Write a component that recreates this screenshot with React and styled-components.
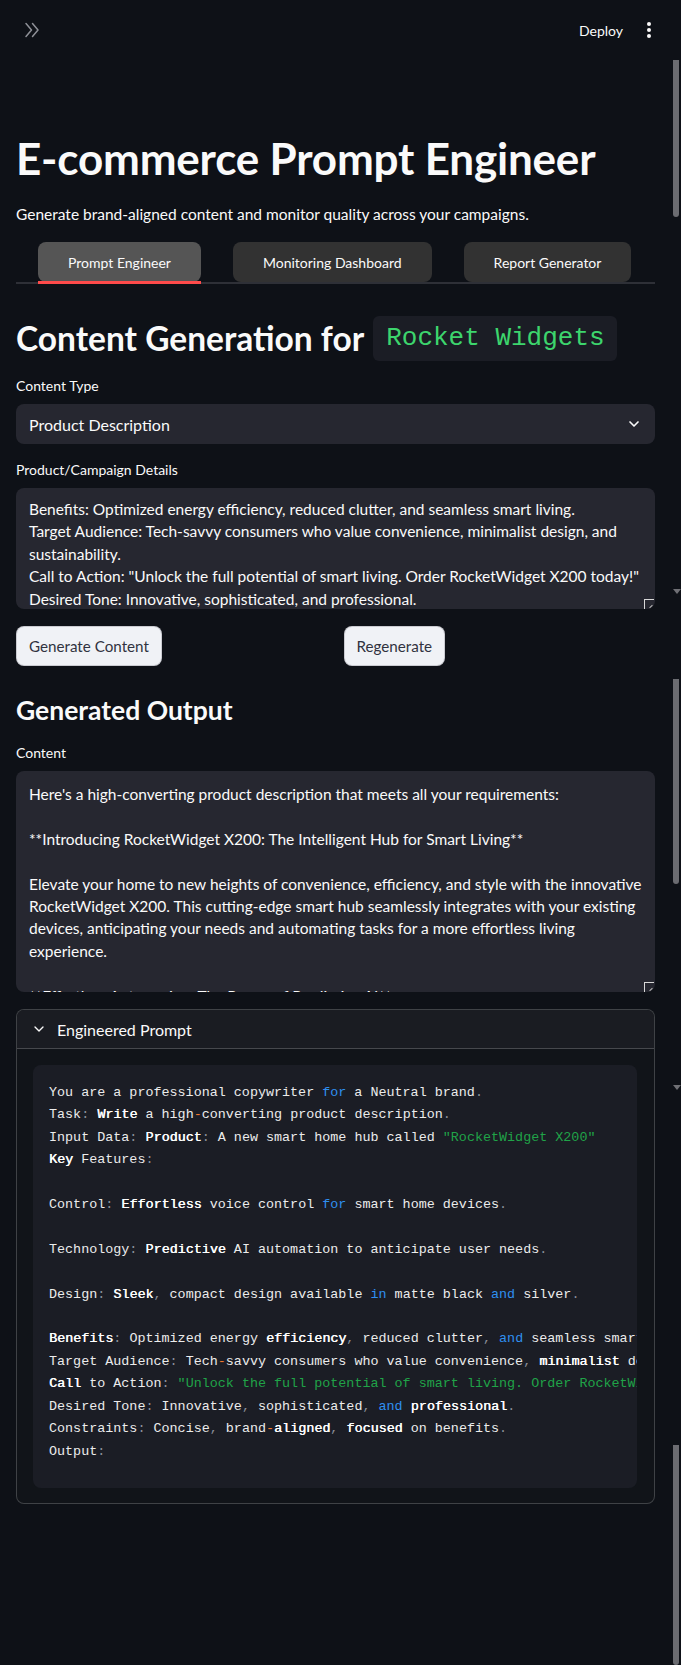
import React from 'react';
import styled, { createGlobalStyle } from 'styled-components';
import { ChevronDown } from 'lucide-react';

const GlobalStyle = createGlobalStyle`
  html, body { margin: 0; padding: 0; background: #0e1117; }
  body { font-family: Lato, "Noto Sans", sans-serif; color: #fafafa; }
  * { box-sizing: border-box; }
`;

const Page = styled.div`
  display: flex;
  min-height: 1665px;
  background: #0e1117;
`;

const Main = styled.main`
  flex: 1;
  min-width: 0;
  padding: 0 18px 0 16px;
  display: flex;
  flex-direction: column;
`;

const Rail = styled.div`
  width: 8px;
  flex-shrink: 0;
  display: flex;
  flex-direction: column;
  align-items: flex-start;
`;

const RailGap = styled.div`
  height: ${(p) => p.$h}px;
  flex-shrink: 0;
`;

const Thumb = styled.div`
  width: 6px;
  height: ${(p) => (p.$h ? `${p.$h}px` : 'auto')};
  flex: ${(p) => (p.$h ? '0 0 auto' : '1')};
  background: #6b6c71;
  border-radius: 0 0 3px 3px;
`;

const RailArrow = styled.div`
  width: 0;
  height: 0;
  border-left: 4px solid transparent;
  border-right: 4px solid transparent;
  border-top: 5px solid #6f7075;
`;

const Header = styled.header`
  height: 60px;
  display: flex;
  align-items: center;
  justify-content: space-between;
  padding-left: 8px;
  margin-right: -2px;
`;

const IconButton = styled.button`
  background: none;
  border: 0;
  padding: 0;
  display: flex;
  align-items: center;
  justify-content: center;
  color: ${(p) => p.$color || '#fafafa'};
  cursor: pointer;
`;

const HeaderRight = styled.div`
  display: flex;
  align-items: center;
  gap: 18px;
`;

const DeployButton = styled.button`
  background: none;
  border: 0;
  padding: 0;
  color: #fafafa;
  font-family: inherit;
  font-size: 14px;
`;

const Title = styled.h1`
  margin: 72px 0 0;
  font-size: 44px;
  line-height: 52px;
  font-weight: 700;
  letter-spacing: -0.2px;
`;

const Subtitle = styled.p`
  margin: 18px 0 0;
  font-size: 15.5px;
  line-height: 24px;
`;

const TabList = styled.div`
  margin-top: 16px;
  display: flex;
  gap: 32px;
  padding-left: 22px;
  border-bottom: 2px solid #2e3037;
`;

const Tab = styled.button`
  position: relative;
  height: 40px;
  padding: 0 30px;
  border: 0;
  border-radius: 8px;
  background: ${(p) => (p.$active ? '#555555' : '#323232')};
  color: #fafafa;
  font-family: inherit;
  font-size: 14px;
  &::after {
    content: '';
    position: absolute;
    left: 0;
    right: 0;
    bottom: -2px;
    height: 3px;
    background: ${(p) => (p.$active ? '#ff4b4b' : 'transparent')};
  }
`;

const H2 = styled.h2`
  margin: 30px 0 0;
  font-size: 33.5px;
  line-height: 48px;
  font-weight: 700;
  display: flex;
  align-items: center;
  gap: 9px;
`;

const InlineCode = styled.code`
  display: inline-block;
  font-family: "Liberation Mono", "DejaVu Sans Mono", monospace;
  font-weight: 400;
  font-size: 26px;
  line-height: 31px;
  padding: 7px 12px 7px 13px;
  border-radius: 6px;
  background: #1b1d25;
  color: #3dd56d;
`;

const Label = styled.label`
  display: block;
  font-size: 14px;
  line-height: 20px;
  margin-top: ${(p) => p.$mt || 16}px;
  margin-bottom: 8px;
`;

const Select = styled.div`
  height: 40px;
  border-radius: 8px;
  background: #262730;
  display: flex;
  align-items: center;
  justify-content: space-between;
  padding: 0 13px;
  font-size: 16px;
`;

const TextBox = styled.div`
  position: relative;
  height: ${(p) => p.$h}px;
  border-radius: 8px;
  background: #262730;
  overflow: hidden;
  display: flex;
  flex-direction: column;
  justify-content: ${(p) => (p.$bottom ? 'flex-end' : 'flex-start')};
`;

const TextContent = styled.div`
  padding: ${(p) => (p.$bottom ? '0 13px' : '12px 13px 0')};
  margin-bottom: ${(p) => (p.$bottom ? '-1px' : '0')};
  font-size: 15.5px;
  line-height: 22.4px;
  white-space: pre-wrap;
  flex-shrink: 0;
`;

const Grip = styled.div`
  position: absolute;
  right: 1px;
  bottom: 0;
  width: 10px;
  height: 10px;
  border-top: 1px solid #d8d8d8;
  border-left: 1px solid #d8d8d8;
  background: #262730;
  &::after {
    content: '';
    position: absolute;
    right: 1px;
    bottom: 2px;
    width: 4px;
    height: 1px;
    background: #bbb;
    transform: rotate(-45deg);
  }
`;

const ButtonRow = styled.div`
  margin-top: 17px;
  display: grid;
  grid-template-columns: 1fr 1fr;
  gap: 16px;
`;

const Button = styled.button`
  justify-self: start;
  height: 40px;
  padding: 0 12px;
  border-radius: 8px;
  border: 1px solid rgba(49, 51, 63, 0.2);
  background: #f0f2f6;
  color: #31333f;
  font-family: inherit;
  font-size: 15.2px;
`;

const H3 = styled.h3`
  margin: 26px 0 0;
  font-size: 26.5px;
  line-height: 36px;
  font-weight: 700;
`;

const Expander = styled.details`
  margin-top: 17px;
  border: 1px solid rgba(250, 250, 250, 0.2);
  border-radius: 8px;
  background: #111419;
  overflow: hidden;
`;

const Summary = styled.summary`
  list-style: none;
  height: 39px;
  display: flex;
  align-items: center;
  gap: 10px;
  padding-left: 14px;
  font-size: 16px;
  background: #1a1c22;
  border-bottom: 1px solid rgba(250, 250, 250, 0.2);
  &::-webkit-details-marker { display: none; }
`;

const ExpanderBody = styled.div`
  padding: 16px 17px 15px 16px;
`;

const CodeBlock = styled.pre`
  margin: 0;
  padding: 17px 16px 25px;
  border-radius: 8px;
  background: #1b1d25;
  overflow: hidden;
  white-space: pre;
  font-family: "Liberation Mono", "DejaVu Sans Mono", monospace;
  font-size: 13.4px;
  line-height: 22.4px;
  color: #ececec;
`;

const Tok = styled.span`
  color: ${(p) =>
    p.$t === 'kw' ? '#2f8ff0' :
    p.$t === 'op' ? '#f0782d' :
    p.$t === 'str' ? '#20a348' :
    p.$t === 'pu' ? '#8a8e98' :
    p.$t === 'b' ? '#ffffff' : '#ececec'};
  text-shadow: ${(p) => (p.$t === 'b' ? '0.4px 0 0 #ffffff' : 'none')};
`;

const ChevronsIcon = () => (
  <svg width="16" height="16" viewBox="0 0 16 16" fill="none" stroke="currentColor" strokeWidth="1.5" strokeLinecap="round" strokeLinejoin="round">
    <path d="M2 1.5 L7.5 8 L2 14.5" />
    <path d="M8.5 1.5 L14 8 L8.5 14.5" />
  </svg>
);

const KebabIcon = () => (
  <svg width="16" height="18" viewBox="0 0 16 18" fill="#fafafa">
    <circle cx="8" cy="3" r="2" />
    <circle cx="8" cy="9" r="2" />
    <circle cx="8" cy="15" r="2" />
  </svg>
);

const detailsText = `Product: A new smart home hub called "RocketWidget X200"
Key Features:

Control: Effortless voice control for smart home devices.

Technology: Predictive AI automation to anticipate user needs.

Design: Sleek, compact design available in matte black and silver.

Benefits: Optimized energy efficiency, reduced clutter, and seamless smart living.
Target Audience: Tech-savvy consumers who value convenience, minimalist design, and sustainability.
Call to Action: "Unlock the full potential of smart living. Order RocketWidget X200 today!"
Desired Tone: Innovative, sophisticated, and professional.`;

const outputText = `Here's a high-converting product description that meets all your requirements:

**Introducing RocketWidget X200: The Intelligent Hub for Smart Living**

Elevate your home to new heights of convenience, efficiency, and style with the innovative RocketWidget X200. This cutting-edge smart hub seamlessly integrates with your existing devices, anticipating your needs and automating tasks for a more effortless living experience.

**Effortless Automation: The Power of Predictive AI**

With intuitive voice control and predictive AI automation, RocketWidget X200 learns your routines and adapts to your lifestyle.`;

const code = [
  [['', 'You are a professional copywriter '], ['kw', 'for'], ['', ' a Neutral brand'], ['pu', '.']],
  [['', 'Task'], ['pu', ':'], ['', ' '], ['b', 'Write'], ['', ' a high'], ['op', '-'], ['', 'converting product description'], ['pu', '.']],
  [['', 'Input Data'], ['pu', ':'], ['', ' '], ['b', 'Product'], ['pu', ':'], ['', ' A new smart home hub called '], ['str', '"RocketWidget X200"']],
  [['b', 'Key'], ['', ' Features'], ['pu', ':']],
  [],
  [['', 'Control'], ['pu', ':'], ['', ' '], ['b', 'Effortless'], ['', ' voice control '], ['kw', 'for'], ['', ' smart home devices'], ['pu', '.']],
  [],
  [['', 'Technology'], ['pu', ':'], ['', ' '], ['b', 'Predictive'], ['', ' AI automation to anticipate user needs'], ['pu', '.']],
  [],
  [['', 'Design'], ['pu', ':'], ['', ' '], ['b', 'Sleek'], ['pu', ','], ['', ' compact design available '], ['kw', 'in'], ['', ' matte black '], ['kw', 'and'], ['', ' silver'], ['pu', '.']],
  [],
  [['b', 'Benefits'], ['pu', ':'], ['', ' Optimized energy '], ['b', 'efficiency'], ['pu', ','], ['', ' reduced clutter'], ['pu', ','], ['', ' '], ['kw', 'and'], ['', ' seamless smart living'], ['pu', '.']],
  [['', 'Target Audience'], ['pu', ':'], ['', ' Tech'], ['op', '-'], ['', 'savvy consumers who value convenience'], ['pu', ','], ['', ' '], ['b', 'minimalist'], ['', ' design'], ['pu', ','], ['', ' '], ['kw', 'and'], ['', ' sustainability'], ['pu', '.']],
  [['b', 'Call'], ['', ' to Action'], ['pu', ':'], ['', ' '], ['str', '"Unlock the full potential of smart living. Order RocketWidget X200 today!"']],
  [['', 'Desired Tone'], ['pu', ':'], ['', ' Innovative'], ['pu', ','], ['', ' sophisticated'], ['pu', ','], ['', ' '], ['kw', 'and'], ['', ' '], ['b', 'professional'], ['pu', '.']],
  [['', 'Constraints'], ['pu', ':'], ['', ' Concise'], ['pu', ','], ['', ' brand'], ['op', '-'], ['b', 'aligned'], ['pu', ','], ['', ' '], ['b', 'focused'], ['', ' on benefits'], ['pu', '.']],
  [['', 'Output'], ['pu', ':']],
];

export default function App() {
  return (
    <Page>
      <GlobalStyle />
      <Main>
        <Header>
          <IconButton $color="#8e9097" aria-label="Expand sidebar">
            <ChevronsIcon />
          </IconButton>
          <HeaderRight>
            <DeployButton>Deploy</DeployButton>
            <IconButton aria-label="Menu">
              <KebabIcon />
            </IconButton>
          </HeaderRight>
        </Header>

        <Title>E-commerce Prompt Engineer</Title>
        <Subtitle>Generate brand-aligned content and monitor quality across your campaigns.</Subtitle>

        <TabList>
          <Tab $active>Prompt Engineer</Tab>
          <Tab>Monitoring Dashboard</Tab>
          <Tab>Report Generator</Tab>
        </TabList>

        <H2>
          Content Generation for <InlineCode>Rocket Widgets</InlineCode>
        </H2>

        <Label $mt={14}>Content Type</Label>
        <Select>
          <span>Product Description</span>
          <ChevronDown size={16} strokeWidth={2.5} />
        </Select>

        <Label>Product/Campaign Details</Label>
        <TextBox $h={121} $bottom>
          <TextContent $bottom>{detailsText}</TextContent>
          <Grip />
        </TextBox>

        <ButtonRow>
          <Button>Generate Content</Button>
          <Button>Regenerate</Button>
        </ButtonRow>

        <H3>Generated Output</H3>

        <Label $mt={15}>Content</Label>
        <TextBox $h={221}>
          <TextContent>{outputText}</TextContent>
          <Grip />
        </TextBox>

        <Expander open>
          <Summary>
            <ChevronDown size={16} strokeWidth={2} />
            Engineered Prompt
          </Summary>
          <ExpanderBody>
            <CodeBlock>
              {code.map((line, i) => (
                <div key={i}>
                  {line.length === 0 ? ' ' : line.map(([t, s], j) => <Tok key={j} $t={t}>{s}</Tok>)}
                </div>
              ))}
            </CodeBlock>
          </ExpanderBody>
        </Expander>
      </Main>
      <Rail>
        <RailGap $h={60} />
        <Thumb $h={157} />
        <RailGap $h={372} />
        <RailArrow />
        <RailGap $h={85} />
        <Thumb $h={205} />
        <RailGap $h={201} />
        <RailArrow />
        <RailGap $h={355} />
        <Thumb />
      </Rail>
    </Page>
  );
}
